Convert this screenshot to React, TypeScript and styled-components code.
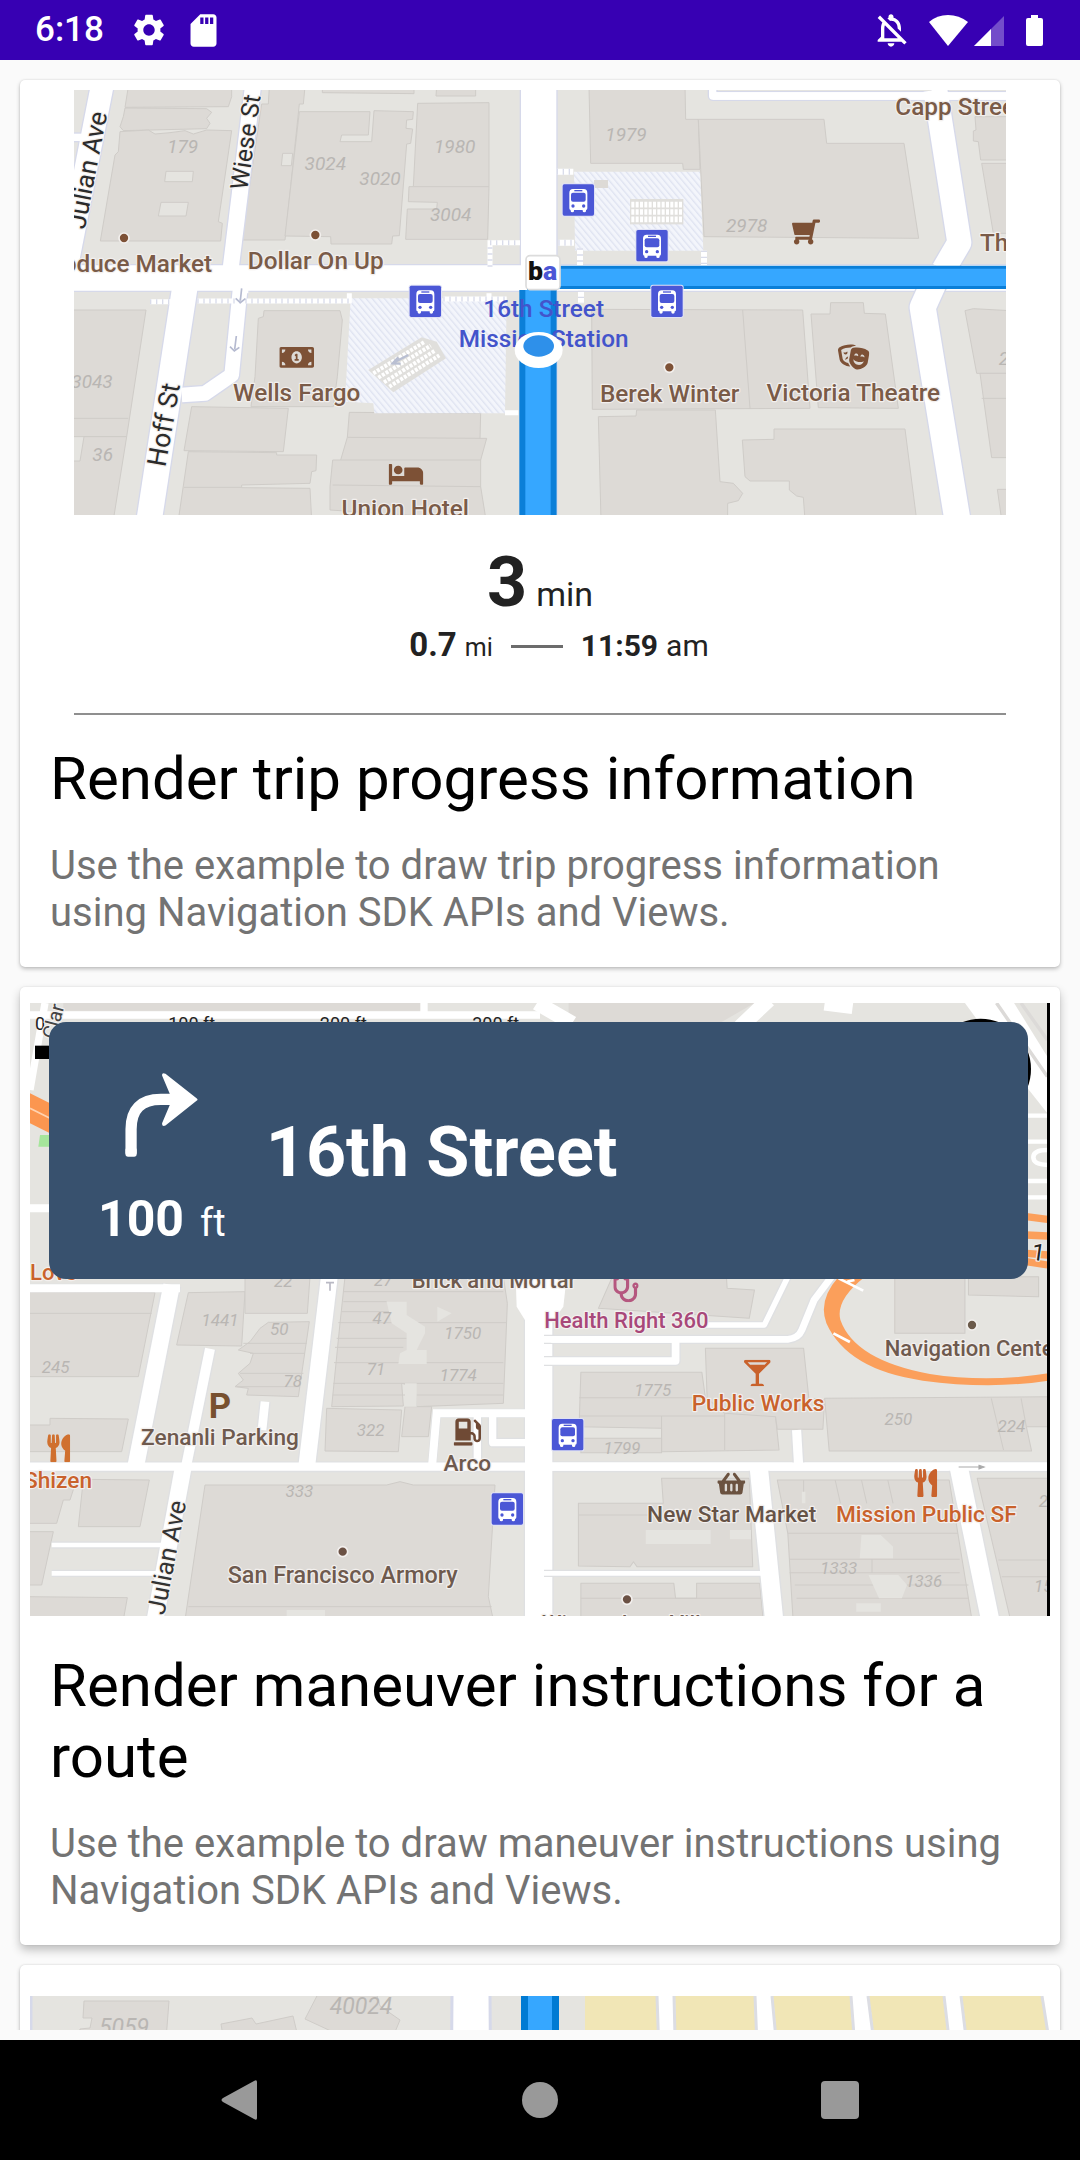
import React from "react";
import styled, { createGlobalStyle } from "styled-components";
import { MdSettings, MdSdCard, MdOutlineNotificationsOff } from "react-icons/md";
import {
  FaShoppingCart,
  FaTheaterMasks,
  FaBed,
  FaMoneyBillAlt,
  FaUtensils,
  FaStethoscope,
  FaGasPump,
  FaShoppingBasket,
  FaGlassMartiniAlt,
} from "react-icons/fa";

const GlobalStyle = createGlobalStyle`
  * { box-sizing: border-box; }
  body { margin: 0; background: #fafafa; font-family: Roboto, "Liberation Sans", sans-serif; }
  h2, p { margin: 0; font-weight: 400; }
`;

/* ---------- Shell ---------- */

const Screen = styled.div`
  display: flex;
  flex-direction: column;
  height: 100vh;
  background: #fafafa;
`;

const StatusBar = styled.header`
  display: flex;
  justify-content: space-between;
  flex: none;
  height: 60px;
  padding: 0 37px 0 35px;
  background: #3700b3;
  color: #fff;
`;

const StatusGroup = styled.div<{ $gap: number }>`
  display: flex;
  align-items: center;
  gap: ${(p) => p.$gap}px;
`;

const Clock = styled.time`
  margin-right: 10px;
  font-size: 35px;
  font-weight: 500;
  line-height: 40px;
`;

const SignalGroup = styled.div`
  display: flex;
  gap: 6px;
  margin-right: 4px;
`;

const Feed = styled.main`
  display: flex;
  flex-direction: column;
  gap: 20px;
  flex: 1;
  min-height: 0;
  margin-bottom: 10px;
  padding: 20px 20px 0;
  overflow: hidden;
`;

const Card = styled.article<{ $lift?: number }>`
  flex: none;
  border-radius: 5px;
  background: #fff;
  box-shadow: 0 ${(p) => p.$lift ?? 2}px ${(p) => (p.$lift ?? 2) * 2}px rgba(0, 0, 0, 0.24),
    0 0 2px rgba(0, 0, 0, 0.12);
`;

const Media = styled.div<{ $padding: string }>`
  position: relative;
  padding: ${(p) => p.$padding};
`;

const MapDrawing = styled.svg`
  display: block;
  width: 100%;
  height: auto;
  font-family: Roboto, "Liberation Sans", sans-serif;
`;

const CardText = styled.div`
  display: grid;
  gap: 28px;
  padding: 28px 30px 31px;
`;

const Title = styled.h2`
  color: #000;
  font-size: 60px;
  line-height: 71px;
`;

const Description = styled.p`
  color: #737373;
  font-size: 40px;
  line-height: 47px;
`;

/* ---------- Trip progress ---------- */

const Progress = styled.div`
  display: flex;
  flex-direction: column;
  align-items: center;
  height: 200px;
  padding-top: 36px;
  border-bottom: 2px solid #8f8f8f;
  color: #222;
`;

const Remaining = styled.div`
  display: flex;
  align-items: baseline;
  gap: 9px;
  font-size: 34px;
  line-height: 62px;

  strong { font-size: 70px; }
`;

const TripLine = styled.div`
  display: flex;
  align-items: baseline;
  gap: 18px;
  padding-left: 38px;
  font-size: 30px;
  line-height: 40px;
`;

const Measure = styled.span<{ $size: number; $unit: number }>`
  display: flex;
  align-items: baseline;
  gap: 8px;
  font-size: ${(p) => p.$unit}px;

  strong { font-size: ${(p) => p.$size}px; }
`;

const Dash = styled.span`
  align-self: center;
  width: 52px;
  height: 3px;
  background: #6c6c6c;
`;

/* ---------- Maneuver banner ---------- */

const Banner = styled.div`
  position: absolute;
  top: 35px;
  left: 29px;
  right: 32px;
  display: flex;
  align-items: center;
  gap: 40px;
  height: 257px;
  padding: 24px 49px 0;
  border-radius: 17px;
  background: #38516e;
  color: #fff;
`;

const Turn = styled.div`
  display: flex;
  flex-direction: column;
  align-items: center;
  gap: 32px;
`;

const Distance = styled.span`
  display: flex;
  align-items: baseline;
  gap: 16px;
  font-size: 38px;
  line-height: 60px;

  strong { font-size: 50px; }
`;

const Street = styled.strong`
  margin-bottom: 22px;
  font-size: 70px;
  line-height: 82px;
`;

/* ---------- Navigation bar ---------- */

const NavBar = styled.nav`
  display: grid;
  grid-template-columns: repeat(3, 1fr);
  flex: none;
  height: 120px;
  padding: 0 90px;
  background: #000;
`;

const NavButton = styled.button`
  display: grid;
  place-items: center;
  padding: 0;
  border: 0;
  background: none;
  color: #999;
`;

/* ---------- Map parts ---------- */

const LAND = "#e5e4e0";
const BUILDING = "#dddad6";
const EDGE = "#cfccc8";
const BROWN = "#7d5136";
const ORANGE = "#c9622c";
const TRANSIT = "#4b57d6";

function Buildings({ shapes }: { shapes: string[] }) {
  return (
    <g fill={BUILDING} stroke={EDGE} strokeWidth="3" strokeLinejoin="round">
      {shapes.map((s) => (
        <polygon key={s} points={s} />
      ))}
    </g>
  );
}

type Road = [path: string, width: number];

function Roads({ roads, casing = "#d6d9ea" }: { roads: Road[]; casing?: string }) {
  return (
    <g fill="none" strokeLinejoin="round">
      {roads.map(([d, w]) => (
        <path key={d} d={d} stroke={casing} strokeWidth={w + 8} />
      ))}
      {roads.map(([d, w]) => (
        <path key={d} d={d} stroke="#fff" strokeWidth={w} />
      ))}
    </g>
  );
}

interface LabelProps {
  x: number;
  y: number;
  children: string;
  color?: string;
  size?: number;
  anchor?: "start" | "middle";
  rotate?: number;
  weight?: number;
  halo?: boolean;
}

function Label({
  x,
  y,
  children,
  color = "#7a5b48",
  size = 73,
  anchor = "middle",
  rotate,
  weight = 500,
  halo = true,
}: LabelProps) {
  return (
    <text
      x={x}
      y={y}
      fill={color}
      fontSize={size}
      fontWeight={weight}
      textAnchor={anchor}
      stroke={halo ? "#f3f0ee" : "none"}
      strokeWidth="7"
      strokeLinejoin="round"
      paintOrder="stroke"
      transform={rotate ? `rotate(${rotate} ${x} ${y})` : undefined}
    >
      {children}
    </text>
  );
}

type HouseNumber = [x: number, y: number, text: string];

function HouseNumbers({ items, size = 51 }: { items: HouseNumber[]; size?: number }) {
  return (
    <g fill="#b9b6b3" fontSize={size} fontStyle="italic" textAnchor="middle">
      {items.map(([x, y, t]) => (
        <text key={t + x} x={x} y={y}>
          {t}
        </text>
      ))}
    </g>
  );
}

function BusStop({ x, y }: { x: number; y: number }) {
  return (
    <g transform={`translate(${x} ${y})`}>
      <rect x="-3" y="-3" width="100" height="100" rx="8" fill="#dfe1f5" />
      <rect width="94" height="94" rx="5" fill={TRANSIT} />
      <path
        d="M31 14H63Q74 14 74 26V72Q74 77 70 77V80Q70 84 65 84T60 80V77H34V80Q34 84 29 84T24 80V77Q20 77 20 72V26Q20 14 31 14Z"
        fill="#fff"
      />
      <path d="M35 19H59" stroke={TRANSIT} strokeWidth="4" />
      <rect x="25" y="25" width="44" height="27" rx="6" fill={TRANSIT} />
      <circle cx="31" cy="65" r="5" fill={TRANSIT} />
      <circle cx="63" cy="65" r="5" fill={TRANSIT} />
    </g>
  );
}

function Dot({ x, y, color = BROWN }: { x: number; y: number; color?: string }) {
  return <circle cx={x} cy={y} r="15" fill={color} stroke="#f3f0ee" strokeWidth="5" />;
}

function TripMap() {
  return (
    <MapDrawing viewBox="0 0 2796 1275" role="img" aria-label="Map of 16th Street Mission Station with a blue route">
      <defs>
        <pattern id="hatch" width="14" height="14" patternUnits="userSpaceOnUse" patternTransform="rotate(-40)">
          <rect width="14" height="14" fill="#f3f5fb" />
          <rect width="4" height="14" fill="#dfe3f1" />
        </pattern>
      </defs>
      <rect width="2796" height="1275" fill={LAND} />
      <g transform="translate(-42 -30)">
        <Buildings
          shapes={[
            "205,20 515,20 515,50 505,80 195,82",
            "195,84 440,86 455,97 440,115 450,130 440,146 190,152 180,140 190,110",
            "180,155 265,150 285,162 330,158 375,152 400,162 440,150 515,152 475,425 487,430 482,483 121,483 165,225 175,215",
            "628,20 735,20 730,72 718,72 675,480 545,480 605,72 625,72",
            "718,95 930,95 925,165 845,165 840,185 935,185 942,92 1060,95 1058,118 1040,120 1038,145 1058,147 1052,190 1040,192 1018,467 998,468 995,492 813,492 812,470 675,468",
            "787,20 1062,20 1062,41 787,38",
            "1130,20 1247,20 1247,48 1128,48",
            "1073,70 1287,68 1287,320 1283,478 1037,478 1042,387 1130,387 1132,367 1045,365 1047,320 1060,320",
            "30,690 258,690 200,1070 30,1070",
            "72,1070 200,1070 160,1320 30,1320 30,1143 60,1143",
            "612,692 840,692 847,720 832,890 820,980 573,980 585,890 595,715 610,710",
            "395,980 685,985 670,1115 372,1112",
            "385,1115 650,1118 650,1125 770,1125 768,1172 755,1175 750,1210 545,1215 545,1223 750,1225 755,1320 355,1320",
            "868,997 1262,1000 1260,1075 1280,1075 1262,1140 1262,1220 1278,1320 810,1290 810,1220 818,1140 842,1140 862,1072",
          ]}
        />
        <g fill={LAND} stroke={EDGE} strokeWidth="3">
          <polygon points="318,274 400,274 397,305 314,305" />
          <polygon points="303,367 385,367 378,408 295,408" />
          <polygon points="668,220 698,220 694,257 664,257" />
          <path d="M1060 320H1287M42 1015H205M862 1072L1260 1075M842 1140H1262M818 1215L1262 1220M372 1222H545" fill="none" />
        </g>
        <polygon points="872,655 1340,655 1335,1000 943,1000 940,970 855,965" fill="url(#hatch)" />
        <polygon points="925,870 1085,772 1130,785 1158,835 1000,937" fill="#e0dfdc" />
        <path
          d="M940 880L1095 785M955 893L1112 797M972 907L1125 812M988 920L1138 826"
          stroke="#fff"
          strokeWidth="12"
          strokeDasharray="9 4"
        />
        <path d="M1045 825L1000 848M1015 832L998 850L1022 851" fill="none" stroke="#b9bfd2" strokeWidth="7" />
        <Roads
          roads={[
            ["M30 172H80", 22],
            ["M128 10L20 560", 68],
            ["M580 10L509 590", 48],
            ["M378 600L266 1330", 76],
            ["M543 600L515 885L435 940L365 945", 44],
            ["M0 594H3000", 76],
            ["M1436 0V1320", 106],
          ]}
        />
        <path d="M580 10L509 590M378 600L266 1330M543 600V640M1436 0V1320" fill="none" stroke="#fff" strokeWidth="44" />
        <path d="M1290 560V488H1380M412 663H868V640M270 665H335M1150 657H1340M1287 640V655M1335 998H1375" fill="none" stroke="#fff" strokeWidth="15" />
        <path d="M1290 560V488H1380M412 663H868M270 665H335M1150 657H1340" fill="none" stroke="#d9dcea" strokeWidth="15" strokeDasharray="4 14" />
        <g fill="none" stroke="#b5bad0" strokeWidth="5">
          <path d="M545 625L541 662M527 655L541 668L556 656" />
          <path d="M529 768L524 808M510 800L523 813L538 802" />
        </g>
      </g>
      <g transform="translate(1368 -30)">
        <Buildings
          shapes={[
            "177,20 465,20 467,118 505,118 510,268 460,268 458,250 182,250",
            "505,118 882,118 890,190 1122,190 1166,475 522,470 512,268",
            "1335,110 1440,110 1440,240 1352,240 1345,185 1330,183 1330,153 1338,150",
            "1355,250 1440,250 1440,460 1390,460",
            "185,688 818,690 840,985 187,988",
            "843,702 900,702 902,668 1000,668 1003,700 1066,702 1105,985 865,983",
            "205,1010 318,1008 320,990 556,990 570,1205 610,1210 638,1240 625,1262 593,1270 593,1320 213,1320",
            "637,1080 732,1078 732,1047 1125,1047 1160,1320 825,1320 820,1252 800,1248 778,1230 778,1203 660,1203 645,1190",
            "1305,692 1330,686 1440,692 1440,880 1340,880",
            "1350,880 1440,880 1440,1133 1385,1133",
            "1402,1228 1440,1228 1440,1320 1415,1320",
          ]}
        />
        <path d="M638 690L660 985M1355 955H1428" stroke={EDGE} strokeWidth="3" />
        <polygon points="132,275 510,275 520,512 135,512" fill="url(#hatch)" />
        <rect x="192" y="300" width="42" height="24" fill={BUILDING} />
        <rect x="300" y="357" width="160" height="76" fill="#e0dfdc" />
        <path d="M304 374H460M304 396H460M304 418H460" stroke="#fff" strokeWidth="17" strokeDasharray="9 4" />
        <Roads
          roads={[
            ["M548 0V48H1440", 22],
            ["M1216 30L1288 488L1240 570", 72],
            ["M1215 600L1178 682L1284 1330", 78],
          ]}
        />
        <path d="M548 48H1440M1216 30V100" stroke="#fff" strokeWidth="22" />
        <path d="M150 505V556M522 512V556M153 632V670M80 275H130M85 488H132" stroke="#fff" strokeWidth="18" />
        <path d="M150 505V556M522 512V556M153 632V670M80 275H130M85 488H132" stroke="#d9dcea" strokeWidth="18" strokeDasharray="4 14" />
      </g>
      <HouseNumbers
        size={57}
        items={[
          [326, 188, "179"],
          [754, 239, "3024"],
          [918, 286, "3020"],
          [1142, 188, "1980"],
          [1130, 394, "3004"],
          [54, 893, "3043"],
          [86, 1113, "36"],
          [1656, 154, "1979"],
          [2018, 427, "2978"],
          [2790, 826, "2"],
        ]}
      />
      <g fill="none" strokeLinejoin="round">
        <path d="M1394 1300V590Q1394 562 1425 562H2820" stroke="#0b7fd8" strokeWidth="70" />
        <path d="M1392 1300V600" stroke="#0b7fd8" strokeWidth="112" />
        <path d="M1392 1300V600" stroke="#36a7ff" strokeWidth="76" />
        <path d="M1394 562H2820" stroke="#36a7ff" strokeWidth="52" />
      </g>
      <Label x={1409} y={682} color="#4354cb" halo={false}>16th Street</Label>
      <Label x={1409} y={772} color="#4354cb" halo={false}>Mission Station</Label>
      <ellipse cx="1394" cy="780" rx="72" ry="54" fill="#fff" />
      <ellipse cx="1394" cy="768" rx="46" ry="32" fill="#2e90ea" />
      <rect x="1356" y="497" width="102" height="102" rx="12" fill="#fff" stroke="#dcdcdc" strokeWidth="5" />
      <text x="1406" y="570" fontSize="80" fontWeight="900" textAnchor="middle" fill="#111">
        b<tspan fill={TRANSIT}>a</tspan>
      </text>
      <BusStop x={1007} y={587} />
      <BusStop x={1466} y={283} />
      <BusStop x={1687} y={420} />
      <BusStop x={1732} y={587} />
      <Dot x={150} y={444} />
      <Dot x={724} y={435} />
      <Dot x={1786} y={832} />
      <FaMoneyBillAlt x={616} y={750} size={104} color={BROWN} />
      <FaBed x={944} y={1101} size={104} color={BROWN} />
      <g transform="translate(4392 0) scale(-1 1)">
        <FaShoppingCart x={2154} y={384} size={84} color={BROWN} />
      </g>
      <FaTheaterMasks x={2292} y={754} size={94} color={BROWN} />
      <Label x={-34} y={545} anchor="start">oduce Market</Label>
      <Label x={725} y={538}>Dollar On Up</Label>
      <Label x={668} y={932}>Wells Fargo</Label>
      <Label x={994} y={1280}>Union Hotel</Label>
      <Label x={2464} y={76} anchor="start">Capp Street</Label>
      <Label x={2718} y={482} anchor="start">Theatre</Label>
      <Label x={1787} y={935}>Berek Winter</Label>
      <Label x={2338} y={932}>Victoria Theatre</Label>
      <Label x={66} y={245} color="#2b2b2b" size={78} weight={400} rotate={-79}>Julian Ave</Label>
      <Label x={540} y={160} color="#2b2b2b" size={74} weight={400} rotate={-82}>Wiese St</Label>
      <Label x={296} y={1009} color="#2b2b2b" size={80} weight={400} rotate={-80}>Hoff St</Label>
    </MapDrawing>
  );
}

function ManeuverMap() {
  return (
    <MapDrawing viewBox="0 0 3060 1839" role="img" aria-label="Map around Mission Street">
      <rect width="3060" height="1839" fill={LAND} />
      <g transform="translate(-30 801)">
        <Buildings
          shapes={[
            "20,65 405,68 355,320 20,320",
            "90,445 325,447 305,545 20,545 20,465 90,465",
            "505,68 675,65 665,228 470,225",
            "675,20 870,20 862,130 675,130",
            "720,175 745,157 868,155 835,380 680,375 685,355 645,350 670,330 655,310 690,280 700,250 655,240 690,215",
            "975,20 1450,20 1462,100 1450,400 1190,410 1185,350 1145,340 1150,408 935,410 960,160",
            "920,415 1145,420 1135,545 915,543",
            "1155,410 1235,410 1225,500 1145,500",
            "555,645 1100,645 1140,635 1180,645 1425,645 1405,980 1420,1050 495,1050",
            "190,628 388,630 360,770 175,770",
            "20,628 170,628 150,690 130,690 110,760 20,760",
            "20,785 100,785 65,945 20,945",
            "20,980 322,983 310,1050 20,1050",
          ]}
        />
        <g fill="none" stroke={EDGE} strokeWidth="3">
          <path d="M30 130H395M970 65H1450M970 95H1100M965 125H1110M955 158H1460M950 205H1160M945 232H1150M942 278H1450M940 340H1450M938 375H1450M670 220H860M690 250H855M660 310H850M650 350H840M505 1010H1415" />
        </g>
        <path d="M1100 95H1160V135L1215 170V190L1190 240H1220V282H1135L1140 250L1160 240V190L1115 160ZM1155 340H1190V410H1155ZM1252 110L1295 130L1252 155ZM800 1020H915V1050H800Z" fill={LAND} />
        <Roads
          casing="#dfe0e2"
          roads={[
            ["M20 54H480", 18],
            ["M455 45L347 590", 50],
            ["M570 236L498 590", 30],
            ["M490 590L405 1050", 50],
            ["M735 395L726 480", 26],
            ["M928 20L860 590", 50],
            ["M95 825H430", 14],
            ["M95 910H420", 14],
            ["M1236 590L1250 430H1530", 20],
            ["M1372 590V430M1418 430V518H1530", 22],
            ["M20 590H3200", 25],
            ["M1556 20V1050", 82],
          ]}
        />
        <path d="M455 60L347 590M490 590L405 1050M928 20L860 590M1556 20V1050M1236 590L1250 430H1530" fill="none" stroke="#fff" strokeWidth="24" />
        <polygon points="1487,20 1640,20 1630,110 1597,155 1518,155 1490,110" fill="#fff" />
        <path d="M930 35V62M918 38H942" stroke="#b9b9c4" strokeWidth="5" />
      </g>
      <g transform="translate(1500 801) scale(1.0523 1)">
        <Buildings
          shapes={[
            "235,20 560,20 562,55 640,60 625,145 195,115",
            "145,307 490,307 500,383 700,440 710,540 375,545 375,475 140,470",
            "145,505 375,505 375,548 145,548",
            "500,235 780,235 795,385 840,390 835,478 705,478 700,440 555,430 505,385",
            "840,385 1490,380 1490,470 1415,470 1430,543 853,543",
            "1040,20 1240,20 1240,190 1040,190",
            "1250,20 1450,20 1450,80 1250,75",
            "138,700 380,700 375,625 625,625 635,890 305,890 295,875 285,890 138,888",
            "145,940 410,940 415,985 475,985 475,940 655,940 665,1050 145,1050",
            "705,630 1195,630 1260,1050 750,1050 735,790",
            "1275,625 1490,625 1490,1050 1370,1050",
          ]}
        />
        <path d="M140 383H500M140 438H555M375 438V545M555 430V540M1315 385L1350 540M1400 385L1415 470M138 735H375M145 985H660M735 790H1220M740 868H1225M740 908H1225M755 945H1250M760 985H1250M780 630V690M870 630L885 700M945 630L960 700M1020 630L1035 700M975 868V908M1335 870H1475M1345 920H1475" fill="none" stroke={EDGE} strokeWidth="3" />
        <path d="M330 780H515V822H330ZM570 780H630V808H570ZM945 795H1000L1035 830V865H940ZM965 915H1050L1075 945L1060 985H995ZM930 1000H1000V1025H930ZM775 665H785V700H775Z" fill={LAND} />
        <Roads
          casing="#dfe0e2"
          roads={[
            ["M40 208H735Q765 205 775 180L810 90L860 20", 20],
            ["M500 165H668L740 10", 16],
            ["M40 273H415V210", 22],
            ["M760 480L766 590", 26],
            ["M652 590L696 1050", 52],
            ["M1222 590L1312 1050", 52],
            ["M40 910H662", 14],
          ]}
        />
        <path d="M40 590H1490M652 590L696 1050" stroke="#fff" strokeWidth="25" />
        <path d="M60 208H415V273" fill="none" stroke="#fff" strokeWidth="20" />
        <path d="M880 20Q820 90 845 160Q905 300 1120 332Q1320 360 1490 330V308Q1310 340 1140 312Q925 270 885 150Q870 90 955 20Z" fill="#fb9f5b" />
        <path d="M865 190L912 216M880 25L950 62M905 35L925 30" stroke="#fff" strokeWidth="8" />
        <path d="M1222 591H1285M1280 586L1295 591L1280 597Z" stroke="#aaa" strokeWidth="3" fill="#aaa" />
      </g>
      <g transform="translate(-30 -39)">
        <polygon points="130,39 1205,39 1205,62 130,62" fill={BUILDING} />
        <path d="M20 75H1560M75 39L30 300M1212 39V75" stroke="#fff" strokeWidth="22" />
        <polygon points="30,310 90,340 90,430 30,400" fill="#fb9650" />
        <path d="M30 355L90 385" stroke="#ffd3b0" strokeWidth="5" />
        <polygon points="60,435 90,435 90,470 55,470" fill="#a5e59b" />
        <path d="M20 655H90M20 895H480" stroke="#fff" strokeWidth="24" />
        <rect x="45" y="167" width="45" height="40" fill="#000" />
      </g>
      <g transform="translate(1500 -39) scale(1.0523 1)">
        <polygon points="110,39 640,39 540,100 110,100" fill={BUILDING} />
        <path d="M20 39L120 100M680 30L600 110M840 40L920 50" stroke="#fff" strokeWidth="44" />
        <polygon points="1240,39 1380,39 1475,200 1475,370 1400,270" fill="#fff" />
        <path d="M1330 39L1475 260M1400 39L1475 150" stroke="#dcdad8" strokeWidth="10" />
        <path d="M1415 377H1475M1415 455H1475M1415 573H1475M1415 622H1475M1475 480Q1435 480 1435 502T1475 525" fill="none" stroke="#fff" strokeWidth="13" />
        <path d="M1415 680L1475 688M1415 735L1475 738M1415 790L1475 795M1415 815L1475 825" stroke="#fb9f5b" strokeWidth="22" />
      </g>
      <circle cx="2852" cy="198" r="151" fill="#000" />
      <g fill="#222" fontSize="54" textAnchor="middle">
        <text x="485" y="82">100 ft</text>
        <text x="940" y="82">200 ft</text>
        <text x="1397" y="82">300 ft</text>
        <text x="30" y="81">0</text>
      </g>
      <Label x={90} y={60} size={60} color="#444" weight={400} rotate={-75}>Clar</Label>
      <Label x={3022} y={772} size={70} color="#222" weight={400} rotate={8}>1</Label>
      <HouseNumbers
        items={[
          [77, 1109, "245"],
          [570, 969, "1441"],
          [748, 996, "50"],
          [788, 1153, "78"],
          [1055, 963, "47"],
          [1038, 1116, "71"],
          [1298, 1008, "1750"],
          [1285, 1133, "1774"],
          [1022, 1299, "322"],
          [808, 1483, "333"],
          [760, 851, "22"],
          [1060, 849, "27"],
          [1868, 1179, "1775"],
          [1776, 1354, "1799"],
          [2605, 1266, "250"],
          [2944, 1288, "224"],
          [2426, 1713, "1333"],
          [2681, 1751, "1336"],
          [3040, 1511, "2"],
          [3040, 1768, "15"],
        ]}
      />
      <BusStop x={1385} y={1471} />
      <BusStop x={1566} y={1248} />
      <Dot x={938} y={1646} color="#6b5144" />
      <Dot x={2826} y={966} color="#6b5a4a" />
      <Dot x={1791} y={1789} color="#6b5144" />
      <FaUtensils x={44} y={1294} size={84} color="#d0702f" />
      <FaUtensils x={2645} y={1398} size={84} color={ORANGE} />
      <FaGasPump x={1271} y={1246} size={82} color="#6f4a35" />
      <FaGlassMartiniAlt x={2142} y={1070} size={80} color={ORANGE} />
      <FaShoppingBasket x={2062} y={1400} size={84} color="#6b5240" />
      <FaStethoscope x={1750} y={822} size={76} color="#b5577f" />
      <text x="570" y="1244" fontSize="104" fontWeight="700" textAnchor="middle" fill="#77502f">P</text>
      <Label x={570} y={1326} size={68} color="#6e5a4e">Zenanli Parking</Label>
      <Label x={-18} y={1454} size={68} anchor="start" color={ORANGE}>Shizen</Label>
      <Label x={1312} y={1403} size={68} color="#6e5a4e">Arco</Label>
      <Label x={938} y={1741} size={70} color="#6e5a4e">San Francisco Armory</Label>
      <Label x={1392} y={854} size={66} color="#6e5a4e">Brick and Mortar</Label>
      <Label x={0} y={831} size={66} anchor="start" color={ORANGE}>Love</Label>
      <Label x={1789} y={975} size={66} color="#a8487a">Health Right 360</Label>
      <Label x={2564} y={1059} size={66} anchor="start" color="#6e5a4e">Navigation Center</Label>
      <Label x={2184} y={1225} size={68} color={ORANGE}>Public Works</Label>
      <Label x={2105} y={1558} size={68} color="#665347">New Star Market</Label>
      <Label x={2689} y={1556} size={68} color={ORANGE}>Mission Public SF</Label>
      <Label x={1792} y={1883} size={66} color="#6e5a4e">Winemakers Villa</Label>
      <Label x={436} y={1668} size={76} color="#333" weight={400} rotate={-79}>Julian Ave</Label>
      <rect x="3051" width="9" height="1839" fill="#000" />
    </MapDrawing>
  );
}

function RouteMap() {
  return (
    <MapDrawing viewBox="0 0 1020 400" role="img" aria-label="Map with a route line">
      <rect width="1020" height="400" fill="#fff" />
      <rect width="555" height="400" fill={LAND} />
      <rect x="423" width="36" height="400" fill="#fff" />
      <path d="M1 0L0 400M422 0L419 400M460 0L463 400" stroke="#d6d9ea" strokeWidth="3" />
      <g fill="#f1e6b6">
        <polygon points="555,0 626,0 640,400 555,400" />
        <polygon points="645,0 724,0 740,400 655,400" />
        <polygon points="743,0 820,0 850,400 780,400" />
        <polygon points="839,0 913,0 960,400 890,400" />
        <polygon points="932,0 1011,0 1020,50 1020,400 980,400" />
      </g>
      <path
        d="M627 0L641 400M644 0L654 400M725 0L741 400M742 0L779 400M821 0L851 400M838 0L889 400M914 0L961 400M931 0L979 400M1012 0L1020 50"
        stroke="#dcdde3"
        strokeWidth="3"
      />
      <g fill={BUILDING} stroke={EDGE}>
        <polygon points="54,5 139,5 134,70 46,70 50,33 60,32 62,22 53,22" />
        <polygon points="191,28 222,22 226,28 263,20 275,70 198,70" />
        <polygon points="289,-4 346,-4 350,10 370,24 355,60 275,23" />
      </g>
      <rect x="491" width="38" height="400" fill="#007bd3" />
      <rect x="498" width="24" height="400" fill="#36a7ff" />
      <HouseNumbers size={23} items={[[331, 18, "40024"], [94, 39, "5059"]]} />
    </MapDrawing>
  );
}

export default function App() {
  return (
    <Screen>
      <GlobalStyle />
      <StatusBar>
        <StatusGroup $gap={16}>
          <Clock>6:18</Clock>
          <MdSettings size={38} />
          <MdSdCard size={39} />
        </StatusGroup>
        <StatusGroup $gap={18}>
          <MdOutlineNotificationsOff size={40} />
          <SignalGroup>
            <svg width="39" height="31" viewBox="0 0 39 31" aria-label="Wi-Fi">
              <path d="M0 7Q8 0 19 0T39 7L19 31Z" fill="currentColor" />
            </svg>
            <svg width="30" height="31" viewBox="0 0 30 31" aria-label="Signal">
              <path d="M30 1V31H0Z" fill="#fff" opacity="0.3" />
              <path d="M17 14V31H0Z" fill="#fff" />
            </svg>
          </SignalGroup>
          <svg width="17" height="31" viewBox="0 0 17 31" aria-label="Battery">
            <path d="M5 0H12V3H15Q17 3 17 5V29Q17 31 15 31H2Q0 31 0 29V5Q0 3 2 3H5Z" fill="currentColor" />
          </svg>
        </StatusGroup>
      </StatusBar>

      <Feed>
        <Card>
          <Media $padding="10px 54px 0">
            <TripMap />
            <Progress>
              <Remaining>
                <strong>3</strong>min
              </Remaining>
              <TripLine>
                <Measure $size={33} $unit={25}>
                  <strong>0.7</strong> mi
                </Measure>
                <Dash />
                <Measure $size={30} $unit={30}>
                  <strong>11:59</strong> am
                </Measure>
              </TripLine>
            </Progress>
          </Media>
          <CardText>
            <Title>Render trip progress information</Title>
            <Description>
              Use the example to draw trip progress information using Navigation SDK APIs and Views.
            </Description>
          </CardText>
        </Card>

        <Card $lift={5}>
          <Media $padding="16px 10px 6px">
            <ManeuverMap />
            <Banner>
              <Turn>
                <svg width="73" height="84" viewBox="0 0 220 254" aria-label="Turn right">
                  <path d="M18 244V170Q18 80 108 80H145" fill="none" stroke="#fff" strokeWidth="34" />
                  <rect x="1" y="225" width="34" height="28" rx="8" fill="#fff" />
                  <path d="M112 8Q110 -3 122 2L216 76Q222 80 216 84L122 159Q110 163 112 151L135 97V63Z" fill="#fff" />
                </svg>
                <Distance>
                  <strong>100</strong> ft
                </Distance>
              </Turn>
              <Street>16th Street</Street>
            </Banner>
          </Media>
          <CardText>
            <Title>Render maneuver instructions for a route</Title>
            <Description>
              Use the example to draw maneuver instructions using Navigation SDK APIs and Views.
            </Description>
          </CardText>
        </Card>

        <Card>
          <Media $padding="31px 10px 6px">
            <RouteMap />
          </Media>
        </Card>
      </Feed>

      <NavBar>
        <NavButton aria-label="Back">
          <svg width="40" height="40" viewBox="0 0 40 40">
            <path d="M37 2V38Q37 41 34 39L3 22Q0 20 3 18L34 1Q37 -1 37 2Z" fill="currentColor" />
          </svg>
        </NavButton>
        <NavButton aria-label="Home">
          <svg width="36" height="36" viewBox="0 0 36 36">
            <circle cx="18" cy="18" r="18" fill="currentColor" />
          </svg>
        </NavButton>
        <NavButton aria-label="Recent apps">
          <svg width="38" height="38" viewBox="0 0 38 38">
            <rect width="38" height="38" rx="4" fill="currentColor" />
          </svg>
        </NavButton>
      </NavBar>
    </Screen>
  );
}
